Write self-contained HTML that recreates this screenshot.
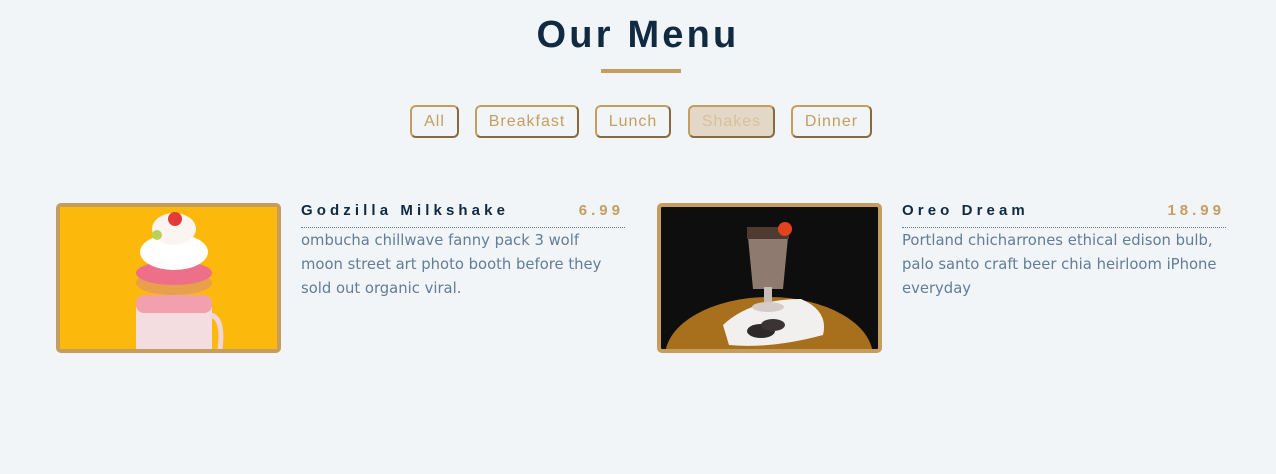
<!DOCTYPE html>
<html><head><style>
*{margin:0;padding:0;box-sizing:border-box}
body{width:1276px;height:474px;background:#f1f5f8;font-family:"Liberation Sans",sans-serif;position:relative;overflow:hidden}
h2{position:absolute;top:14px;left:0;width:1276px;text-align:center;font-size:38px;letter-spacing:3.2px;color:#102a42;font-weight:bold}
.ul{position:absolute;left:601px;top:69px;width:80px;height:4px;background:#c59d5f}
.btn{position:absolute;top:105px;height:33px;border:2px solid #c59d5f;border-right-color:#8a6a3c;border-bottom-color:#8a6a3c;border-radius:6px;color:#c59d5f;font-size:16px;letter-spacing:1px;text-align:center;line-height:29px;background:transparent}
.img{position:absolute;top:203px;width:225px;height:150px;border:4px solid #c59d5f;border-radius:5px;overflow:hidden}
.t{position:absolute;top:202px;font-size:15px;font-weight:bold;letter-spacing:4.1px;color:#102a42}
.p{position:absolute;top:202px;font-size:15px;font-weight:bold;letter-spacing:4px;color:#c59d5f;text-align:right}
.dl{position:absolute;top:227px;width:324px;border-top:1px dotted #617d98}
.d{position:absolute;top:229px;width:324px;font-family:"DejaVu Sans",sans-serif;font-size:14.8px;line-height:24px;color:#617d98}
</style></head><body>
<h2>Our Menu</h2><div class="ul"></div>
<div class="btn" style="left:410px;width:49px">All</div>
<div class="btn" style="left:475px;width:104px">Breakfast</div>
<div class="btn" style="left:595px;width:76px">Lunch</div>
<div class="btn" style="left:688px;width:87px;background:#e3d8c7;color:#d9c09a">Shakes</div>
<div class="btn" style="left:791px;width:81px">Dinner</div>

<div class="img" style="left:56px">
<svg width="217" height="142" viewBox="0 0 217 142"><rect width="217" height="142" fill="#fcb90c"/>
<rect x="76" y="100" width="76" height="42" fill="#f3dde0"/>
<path d="M150 108 q14 2 10 34" stroke="#f0d6dc" stroke-width="5" fill="none"/>
<rect x="76" y="88" width="76" height="18" rx="8" fill="#f2a0ad"/>
<ellipse cx="114" cy="76" rx="38" ry="12" fill="#e8a04c"/>
<ellipse cx="114" cy="66" rx="38" ry="12" fill="#ee6f8a"/>
<ellipse cx="114" cy="45" rx="34" ry="18" fill="#fff"/>
<ellipse cx="114" cy="22" rx="22" ry="16" fill="#fbf5f2"/>
<circle cx="115" cy="12" r="7" fill="#e33b3a"/><circle cx="97" cy="28" r="5" fill="#b9d05a"/>
</svg></div>
<div class="t" style="left:301px">Godzilla Milkshake</div>
<div class="p" style="left:520px;width:104px">6.99</div>
<div class="dl" style="left:301px"></div>
<div class="d" style="left:301px">ombucha chillwave fanny pack 3 wolf moon street art photo booth before they sold out organic viral.</div>

<div class="img" style="left:657px">
<svg width="217" height="142" viewBox="0 0 217 142"><rect width="217" height="142" fill="#0e0e0e"/>
<ellipse cx="108" cy="150" rx="104" ry="60" fill="#a8701c"/>
<path d="M62 118 Q90 92 140 92 Q168 104 162 128 Q110 142 68 138 Z" fill="#f2f0ee"/>
<path d="M86 20 h42 l-6 62 h-30 z" fill="#8e7a6e"/>
<rect x="86" y="20" width="42" height="12" fill="#4d3a30"/>
<rect x="103" y="80" width="8" height="18" fill="#c8bdb8"/>
<ellipse cx="107" cy="100" rx="16" ry="5" fill="#d4ccc8"/>
<circle cx="124" cy="22" r="7" fill="#e2421d"/>
<ellipse cx="100" cy="124" rx="14" ry="7" fill="#2e2a2a"/><ellipse cx="112" cy="118" rx="12" ry="6" fill="#3a3434"/>
</svg></div>
<div class="t" style="left:902px">Oreo Dream</div>
<div class="p" style="left:1121px;width:104px">18.99</div>
<div class="dl" style="left:902px"></div>
<div class="d" style="left:902px">Portland chicharrones ethical edison bulb, palo santo craft beer chia heirloom iPhone everyday</div>
</body></html>
